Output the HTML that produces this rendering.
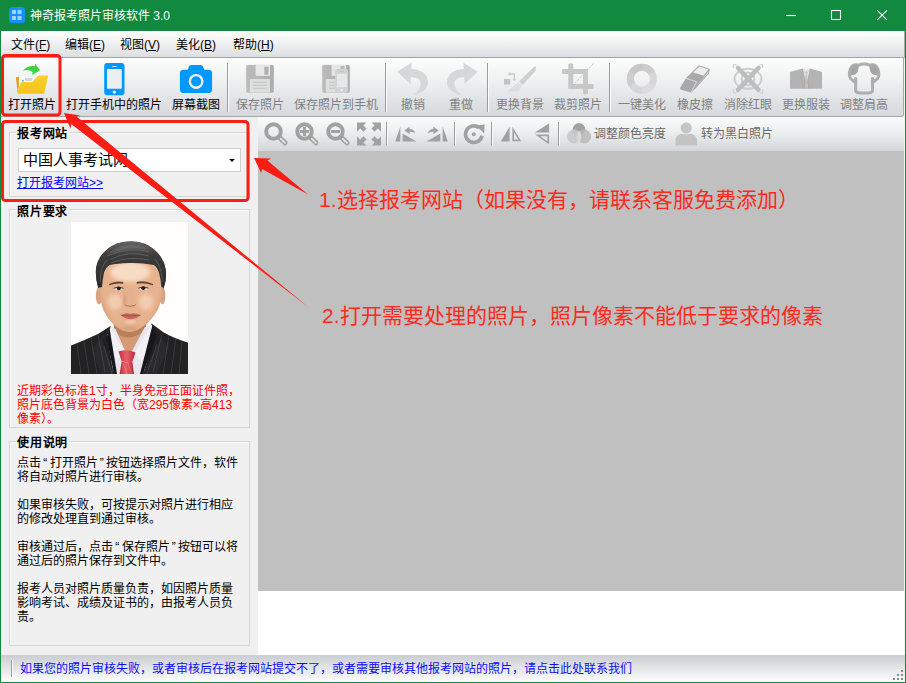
<!DOCTYPE html>
<html lang="zh-CN">
<head>
<meta charset="utf-8">
<title>神奇报考照片审核软件 3.0</title>
<style>
*{box-sizing:border-box;margin:0;padding:0}
html,body{width:906px;height:683px;overflow:hidden;background:#fff}
body{font-family:"Liberation Sans",sans-serif;font-size:12px;color:#000;position:relative}
.abs{position:absolute}
#win{position:absolute;left:0;top:0;width:906px;height:683px;background:#11893e;overflow:hidden}
#title{position:absolute;left:0;top:0;width:906px;height:31px;background:#11893e;color:#fff}
#title .txt{position:absolute;left:30px;top:8px;font-size:12px;line-height:16px;white-space:nowrap;color:#fff}
#appico{position:absolute;left:9px;top:7px;width:16px;height:16px}
#menubar{position:absolute;left:1px;top:31px;width:904px;height:27px;background:linear-gradient(#ffffff 0%,#f3f4f5 35%,#dcdfe2 100%);border-bottom:1px solid #a3a3a3;border-right:1px solid #a8a8a8}
#menubar span{position:absolute;top:6px;line-height:16px;font-size:12px;white-space:nowrap}
#tb1{position:absolute;left:1px;top:58px;width:903px;height:59px;border-right:1px solid #a9a9a9;border-bottom-right-radius:3px;background:linear-gradient(#fdfdfd 0%,#eef0f1 40%,#d5d9dd 100%);border-bottom:1px solid #a6a6a6}
.b{position:absolute;top:0;height:58px}
.b .l{position:absolute;left:-20px;right:-20px;top:39px;text-align:center;line-height:16px;font-size:12px;white-space:nowrap;color:#000}
.b.d .l{color:#7f7f7f}
.b svg{position:absolute;left:50%;top:5px;width:32px;height:32px;margin-left:-16px;overflow:visible}
.sep{position:absolute;width:2px;border-left:1px solid #9c9c9c;border-right:1px solid #fbfbfb}
#left{position:absolute;left:1px;top:117px;width:257px;height:538px;background:#f0f0f0}
.grp{position:absolute;border:1px solid #d5d5d5;box-shadow:inset 1px 1px 0 #fafafa}
.gt{position:absolute;left:15px;font-weight:bold;font-size:12px;line-height:14px;letter-spacing:.8px;margin-top:1px;background:#f0f0f0;padding:0 1px;white-space:nowrap}
#tb2{position:absolute;left:258px;top:117px;width:646px;height:34px;background:linear-gradient(#fbfbfb 0%,#eceeef 45%,#d3d7db 100%)}
#tb2 svg{position:absolute;top:5px;width:24px;height:24px;overflow:visible}
#tb2 .t{position:absolute;top:9px;line-height:16px;font-size:12px;color:#6a6a6a;white-space:nowrap}
#canvas{position:absolute;left:258px;top:151px;width:646px;height:440px;background:#c0c0c0}
#white{position:absolute;left:258px;top:591px;width:646px;height:64px;background:#fff}
#status{position:absolute;left:1px;top:655px;width:904px;height:27px;background:linear-gradient(#cacdd1 0%,#e4e6e8 50%,#fcfcfc 100%)}
#status .txt{position:absolute;left:19px;top:6px;line-height:16px;font-size:12px;color:#0c0cfa;white-space:nowrap}
.q{display:inline-block;width:8.5px;text-align:center;font-style:normal}
.red{font-weight:300;color:#fc2a1c;font-size:21px;line-height:28px;white-space:nowrap;position:absolute}
#ann{position:absolute;left:0;top:0;width:906px;height:683px;pointer-events:none}
</style>
</head>
<body>
<div id="win">
  <div id="title">
    <svg id="appico" viewBox="0 0 16 16"><rect x="0" y="0" width="16" height="16" rx="3.2" fill="#1590ff"/><g fill="#9fd0ff"><rect x="3" y="3" width="4" height="4"/><rect x="8.5" y="3" width="4" height="4"/><rect x="3" y="9" width="4" height="4"/><rect x="8.5" y="9" width="4" height="4"/></g></svg>
    <div class="txt">神奇报考照片审核软件 3.0</div>
    <svg class="abs" style="left:780px;top:5px;width:120px;height:22px" viewBox="0 0 120 22"><g stroke="#fff" stroke-width="1.1" fill="none"><path d="M6 10.5H16"/><rect x="51.5" y="5.5" width="9" height="9"/><path d="M97.3 5.3l9.6 9.6M106.9 5.3l-9.6 9.6"/></g></svg>
  </div>
  <div id="menubar">
    <span style="left:10px">文件(<u>F</u>)</span>
    <span style="left:64px">编辑(<u>E</u>)</span>
    <span style="left:119px">视图(<u>V</u>)</span>
    <span style="left:175px">美化(<u>B</u>)</span>
    <span style="left:232px">帮助(<u>H</u>)</span>
  </div>
  <div class="abs" style="left:900px;top:58px;width:5px;height:597px;background:#f4f4f4"></div>
  <div id="tb1">
<div class="b" style="left:2px;width:58px"><svg viewBox="0 0 32 32"><defs><linearGradient id="fg" x1="0" y1="0" x2="0" y2="1"><stop offset="0" stop-color="#fbd02a"/><stop offset="1" stop-color="#f3c41e"/></linearGradient></defs><path d="M-0.1 14.6Q0 14 .8 13.9L2.9 13.7V24L1.7 30Z" fill="#ee9a1c"/><path d="M3.2 13.4H12L18.5 14.6 16 19 5 19.6 3.2 27Z" fill="#fff"/><path d="M9 14.4l8 .9-1.3 2.6-6.7.2z" fill="#cfd6e2"/><rect x="6.2" y="16.8" width="1.4" height="1.8" fill="#2fa0f0"/><path d="M2.6 30.7Q1.4 30.7 1.7 29.5L4.7 19.8Q5 19 5.9 19H15.6Q16.3 19 16.8 18.4L21.5 13.2Q22 12.6 22.8 12.6H31Q32.3 12.6 32 13.8L28.3 29.8Q28.1 30.7 27.1 30.7Z" fill="url(#fg)"/><path d="M7 7.8Q11.4 2.2 18.8 3.2L19.2.7 24 7.3 16.1 12.1 16.6 8.9Q11.8 5.9 7 7.8Z" fill="#3cd43c"/></svg><div class="l">打开照片</div></div>
<div class="b" style="left:60px;width:106px"><svg viewBox="0 0 32 32"><rect x="6.2" y="0" width="20.3" height="32.2" rx="3" fill="#0099ff"/><rect x="9" y="6.1" width="14.8" height="19.6" rx=".6" fill="#eceeef"/><rect x="14.1" y="2.9" width="4.5" height="1.1" rx=".5" fill="#d8ecfb"/><circle cx="16.3" cy="29.1" r="1.7" fill="#e8f2fa"/></svg><div class="l">打开手机中的照片</div></div>
<div class="b" style="left:166px;width:58px"><svg viewBox="0 0 32 32"><rect x="-.1" y="6.7" width="32.2" height="23.4" rx="3.6" fill="#0099ff"/><path d="M7.4 7.5L8.8 3.7Q9.4 2 11.3 2H20.7Q22.6 2 23.2 3.7L24.6 7.5Z" fill="#0099ff"/><circle cx="16.1" cy="18.4" r="6.3" fill="none" stroke="#f4f1ee" stroke-width="2.4"/></svg><div class="l">屏幕截图</div></div>
<div class="sep" style="left:226px;top:5px;height:49px"></div>
<div class="b d" style="left:230px;width:58px"><svg viewBox="0 0 32 32"><defs><linearGradient id="sg" x1="0" y1="0" x2="1" y2="0"><stop offset="0" stop-color="#bbbbbb"/><stop offset="1" stop-color="#adadad"/></linearGradient></defs><rect x="1.6" y="1.4" width="28.8" height="29" rx="2.4" fill="#e9ebec"/><rect x="2.2" y="2" width="27.6" height="27.8" rx="1.8" fill="url(#sg)"/><rect x="11.6" y="2" width="14.4" height="10.9" fill="#e6e6e6"/><rect x="20.4" y="3.8" width="4.1" height="7.9" rx=".5" fill="#b0b0b0"/><rect x="5.8" y="16" width="20.2" height="13.6" rx=".6" fill="#dddede"/><path d="M9 19.2H22.7M9 22.2H22.7M9 25.3H22.7" stroke="#c2c2c2" stroke-width="1.1"/></svg><div class="l">保存照片</div></div>
<div class="b d" style="left:288px;width:94px"><svg viewBox="0 0 32 32"><rect x="1.6" y="1.4" width="28.8" height="29" rx="2.4" fill="#e9ebec"/><rect x="2.2" y="2" width="27.6" height="27.8" rx="1.8" fill="url(#sg)"/><rect x="11.6" y="2" width="14.4" height="10.9" fill="#e6e6e6"/><rect x="20.4" y="3" width="4.1" height="3" rx=".5" fill="#b8b8b8"/><rect x="5.8" y="16" width="20.2" height="13.6" rx=".6" fill="#dddede"/><path d="M9 19.2H15M9 22.2H15M9 25.3H15" stroke="#c2c2c2" stroke-width="1.1"/><rect x="15.1" y="6.1" width="12.9" height="23.5" rx="2" fill="#d2d2d2"/><rect x="16.9" y="10.8" width="10.1" height="13.4" fill="#e6e7e8"/><rect x="20" y="8.3" width="3.5" height=".8" fill="#bcbcbc"/><rect x="20.6" y="26" width="2.2" height="2" rx=".6" fill="#efefef"/></svg><div class="l">保存照片到手机</div></div>
<div class="sep" style="left:384px;top:5px;height:49px"></div>
<div class="b d" style="left:388px;width:48px"><svg viewBox="0 0 32 32"><path d="M.3 8.8L14.6-.2 14.2 6C22.5 6 31 10.5 31 19.3 31 26 24 31 16.2 32 21 29 24 24.5 23.5 19.8 23 15.6 19 14.2 13.7 14.2L13.5 21Z" fill="#d6d7d8"/></svg><div class="l">撤销</div></div>
<div class="b d" style="left:436px;width:48px"><svg viewBox="0 0 32 32"><path d="M.3 8.8L14.6-.2 14.2 6C22.5 6 31 10.5 31 19.3 31 26 24 31 16.2 32 21 29 24 24.5 23.5 19.8 23 15.6 19 14.2 13.7 14.2L13.5 21Z" fill="#d6d7d8" transform="translate(33 0) scale(-1 1)"/></svg><div class="l">重做</div></div>
<div class="sep" style="left:486px;top:5px;height:49px"></div>
<div class="b d" style="left:490px;width:58px"><svg viewBox="0 0 32 32"><path d="M29.3 4.6L31.8 3.2 31.8 7.6 18.8 21.8 15 18.4Z" fill="#cfcfcf"/><path d="M14.2 19.2L18 22.6 14.8 28.4H3.2Z" fill="#dedede"/><rect x="0" y="16" width="6.2" height="5.6" fill="#c3c3c3"/><path d="M5.6 11H10.4V16.6" fill="none" stroke="#c6c6c6" stroke-width="1.3"/><path d="M3.8 11L6.4 9.2V12.8ZM10.4 18.2L8.6 15.6H12.2Z" fill="#c6c6c6"/></svg><div class="l">更换背景</div></div>
<div class="b d" style="left:548px;width:58px"><svg viewBox="0 0 32 32"><path d="M6.3 2Q6.3.6 7.7.6H9.9Q11.3.6 11.3 2V6.1H26V21H30.3Q31.7 21 31.7 22.4V24.5Q31.7 25.9 30.3 25.9H26V30.1Q26 31.5 24.6 31.5H22.5Q21.1 31.5 21.1 30.1V25.9H6.3V11.1H1.4Q0 11.1 0 9.7V7.5Q0 6.1 1.4 6.1H6.3ZM11.3 11.1V21H21.1V11.1Z" fill="#c7c7c7" fill-rule="evenodd"/><path d="M31.6.4L12.8 20.4" stroke="#cdcdcd" stroke-width="1" stroke-dasharray="3 1.2"/></svg><div class="l">裁剪照片</div></div>
<div class="sep" style="left:608px;top:5px;height:49px"></div>
<div class="b d" style="left:612px;width:58px"><svg viewBox="0 0 32 32"><circle cx="15.9" cy="15.8" r="11.5" fill="none" stroke="#d6d6d6" stroke-width="7"/><g fill="none" stroke-width="7"><path d="M15.9 4.3A11.5 11.5 0 0 1 25.9 10" stroke="#cdcdcd"/><path d="M25.9 21.6A11.5 11.5 0 0 1 15.9 27.3" stroke="#dcdcdc"/><path d="M5.9 21.6A11.5 11.5 0 0 1 5.9 10" stroke="#cecece"/><path d="M5.9 10A11.5 11.5 0 0 1 15.9 4.3" stroke="#c6c6c6"/></g></svg><div class="l">一键美化</div></div>
<div class="b d" style="left:670px;width:48px"><svg viewBox="0 0 32 32"><path d="M.8 25.2L7 15 20 2.2 30.9 6 30 10.4 16.8 25.2 12.2 29.5 1.8 26.8Z" fill="#a9a9a9"/><path d="M14 9.6L20.4 3.4 29.4 6.6 24.6 12.6Z" fill="#eeeeee"/><path d="M25.4 13.4L29.6 8.2 29.2 10 17 23.6Z" fill="#e3e3e3"/><path d="M7 15.2L17.6 18.8 12.4 28.8" fill="none" stroke="#dcdcdc" stroke-width=".9"/></svg><div class="l">橡皮擦</div></div>
<div class="b d" style="left:718px;width:58px"><svg viewBox="0 0 32 32"><ellipse cx="16" cy="15.8" rx="13.4" ry="10" fill="none" stroke="#cdcdcd" stroke-width="2"/><circle cx="16" cy="15.8" r="6.4" fill="none" stroke="#cdcdcd" stroke-width="2"/><path d="M1.4 5V1.8H4.6M27.4 1.8H30.6V5M30.6 26.6V29.8H27.4M4.6 29.8H1.4V26.6" fill="none" stroke="#d0d0d0" stroke-width="1.3"/><path d="M6 5L26.4 26.8M26.4 5L6 26.8" stroke="#bebebe" stroke-width="4.6" stroke-linecap="round"/></svg><div class="l">消除红眼</div></div>
<div class="b d" style="left:776px;width:58px"><svg viewBox="0 0 32 32"><path d="M0 9L12.6 5.6 16.4 8 20.2 5.6 32 9V25.7H0Z" fill="#b3b3b3"/><path d="M12.6 5.4L16.4 7.2 20.2 5.4 17.4 18.4H15.4Z" fill="#e4e4e4"/><path d="M15.2 9L16.4 7.8 17.6 9 17.1 11.2 18.2 23.6 16.4 25.7 14.6 23.6 15.7 11.2Z" fill="#c2c2c2"/><path d="M12.4 6L15 19 13.4 25.7M20.4 6L17.8 19 19.4 25.7" stroke="#a4a4a4" stroke-width=".8" fill="none"/></svg><div class="l">更换服装</div></div>
<div class="b d" style="left:834px;width:58px"><svg viewBox="0 0 32 32"><path d="M10.6 2.2Q16 -.2 21.6 2.2 27.6 .6 30 6.4 31.8 11.6 29.6 15.6L26 18.6 24.4 15.4 24.6 26.6Q24.6 29.9 21.4 29.9H10.8Q7.6 29.9 7.6 26.6L7.8 15.4 6.2 18.6 2.6 15.6Q.4 11.6 2.2 6.4 4.6 .6 10.6 2.2Z" fill="none" stroke="#aeaeae" stroke-width="3" stroke-linejoin="round"/><path d="M10.8 2.2Q4.4 .8 2.6 7 1.8 10.4 3.4 12.6 8.6 12 10 8 10.8 5 10.8 2.2ZM21.4 2.2Q27.8 .8 29.6 7 30.4 10.4 28.8 12.6 23.6 12 22.2 8 21.4 5 21.4 2.2Z" fill="#a6a6a6"/></svg><div class="l">调整肩高</div></div>
</div>
  <div id="left">
<div class="grp" style="left:8px;top:15px;width:241px;height:65px"></div>
<div class="gt" style="top:9px">报考网站</div>
<div class="abs" style="left:17px;top:31px;width:223px;height:24px;background:#fff;border:1px solid #cfcfcf;font-size:15px;line-height:22px;padding-left:4px;white-space:nowrap;overflow:hidden">中国人事考试网</div>
<svg class="abs" style="left:228px;top:41px;width:8px;height:5px" viewBox="0 0 8 5"><path d="M.2.9H5.8L3 4.1Z" fill="#000"/></svg>
<div class="abs" style="left:16px;top:59px;line-height:14px;font-size:12px;color:#0000ff;text-decoration:underline;white-space:nowrap">打开报考网站&gt;&gt;</div>

<div class="grp" style="left:8px;top:92px;width:241px;height:219px"></div>
<div class="gt" style="top:87px">照片要求</div>

<svg class="abs" style="left:70px;top:105px;width:117px;height:152px" viewBox="0 0 117 152">
<defs>
<filter id="bl" x="-5%" y="-5%" width="110%" height="110%"><feGaussianBlur stdDeviation="0.55"/></filter>
<filter id="bl2" x="-20%" y="-20%" width="140%" height="140%"><feGaussianBlur stdDeviation="2.2"/></filter>
<filter id="bl3" x="-20%" y="-20%" width="140%" height="140%"><feGaussianBlur stdDeviation="1.1"/></filter>
<clipPath id="pc"><rect x="0" y="0" width="117" height="152"/></clipPath>
<clipPath id="fc"><path d="M30 52Q30 40 40 36 58 30 78 35 89 40 90 54L91 68Q90.5 80 86.5 88 81 98 72 104.5 65 109.5 58.5 110 52 109.5 45 104.5 37 98 32.5 88 29 80 29 68Z"/></clipPath>
<linearGradient id="hg" x1="0" y1="0" x2="0" y2="1"><stop offset="0" stop-color="#626262"/><stop offset=".3" stop-color="#3c3c3c"/><stop offset="1" stop-color="#2c2c2c"/></linearGradient>
<linearGradient id="tg" x1="0" y1="0" x2="1" y2="0"><stop offset="0" stop-color="#c2303f"/><stop offset=".45" stop-color="#e8606c"/><stop offset="1" stop-color="#b62c3a"/></linearGradient>
</defs>
<rect width="117" height="152" fill="#fffefd"/>
<g clip-path="url(#pc)"><g filter="url(#bl)">
<!-- ears -->
<ellipse cx="28" cy="74" rx="3.2" ry="8.5" fill="#d9a283"/>
<ellipse cx="91.4" cy="74" rx="3" ry="8.5" fill="#d9a283"/>
<!-- neck -->
<path d="M42 92L44 112 36 126 58 150 82 122 74 110 76 92Z" fill="#d39a74"/>
<path d="M42 100Q58 118 76 100L74 108Q58 122 44 110Z" fill="#b27a56" opacity=".8"/>
<!-- suit -->
<path d="M-1 124Q14 118 27 112L39.5 104 50 152H-1Z" fill="#202024"/>
<path d="M118 121Q102 116 92 110L80.5 101.5 64 152H118Z" fill="#202024"/>
<path d="M30 152H88V140H30Z" fill="#202024"/>
<!-- shirt -->
<path d="M39.5 105L44.5 107 55 131 60 131 73.5 105.5 80.5 102.5 84 112 72.5 152H42.5L36 114Z" fill="#e9e5ee"/>
<path d="M39.5 105L53.5 130 46 138 36.5 113Z" fill="#f3f1f6"/>
<path d="M80.5 102.5L63.5 131 70.5 139 84 111Z" fill="#f3f1f6"/>
<!-- lapels -->
<path d="M38.5 106L31 118 43.5 152H30L20 128Z" fill="#29292e"/>
<path d="M81.5 103L90 116 71.5 152H86L98 126Z" fill="#29292e"/>
<path d="M38.5 106L35.5 116 43 152H46Z" fill="#18181b"/>
<path d="M81.5 103L85.5 114 72 152H69Z" fill="#18181b"/>
<!-- pinstripes -->
<g stroke="#6d6d74" stroke-width=".45" opacity=".75" fill="none"><path d="M6 122L10 152M13 119L18 152M20 116L26 152M27 113L34 150M98 113L92 152M105 116L100 152M111 119L108 152M91 112L82 150M33 124L41 152M86 122L76 152"/></g>
<!-- tie -->
<path d="M47.5 129.5Q56 126.5 64.5 130.5L61.5 139.5Q56 141.5 50.5 139Z" fill="url(#tg)"/>
<path d="M50.6 139.2Q56 141.4 61.4 139.6L63 152H48.6Z" fill="url(#tg)"/>
<path d="M52 141L56 152M57 141L60.5 152" stroke="#f0a0a8" stroke-width=".6" opacity=".7"/>
<!-- hair back -->
<path d="M27.5 66Q22.5 50 26.5 40 32 27 46 21.5 60 17 73 21.5 87 27 93 41 97.5 53 92.5 67L89 58 60 34 33 56Z" fill="url(#hg)"/>
<!-- face -->
<path d="M30 52Q30 40 40 36 58 30 78 35 89 40 90 54L91 68Q90.5 80 86.5 88 81 98 72 104.5 65 109.5 58.5 110 52 109.5 45 104.5 37 98 32.5 88 29 80 29 68Z" fill="#e7b28e"/>
<g clip-path="url(#fc)">
 <ellipse cx="59" cy="50" rx="20" ry="10" fill="#f8dcc4" filter="url(#bl2)"/>
 <ellipse cx="44" cy="80" rx="7" ry="8" fill="#f6d4bb" filter="url(#bl2)" opacity=".8"/>
 <ellipse cx="75" cy="80" rx="7" ry="8" fill="#f6d4bb" filter="url(#bl2)" opacity=".8"/>
 <path d="M27 60Q28 90 48 110L26 112Z" fill="#c48c68" filter="url(#bl2)" opacity=".8"/>
 <path d="M93 60Q92 90 70 110L94 112Z" fill="#c48c68" filter="url(#bl2)" opacity=".8"/>
 <ellipse cx="58.5" cy="106.5" rx="9" ry="2.6" fill="#d6a380" filter="url(#bl3)"/><path d="M54 68Q52 78 52.5 83L56 82Z" fill="#c99573" filter="url(#bl3)" opacity=".7"/><ellipse cx="59.5" cy="100" rx="6" ry="2" fill="#f2cdb2" filter="url(#bl3)" opacity=".8"/>
</g>
<!-- hair front -->
<path d="M27 66Q23 50 27 40 32.5 27 46 21.5 60 17.5 73 21.5 87 27 93 41 97 53 92.6 66L90.4 65Q89.5 56 87.9 50.6 86 44.5 82.7 42.9 70 40.4 58 41 46 41.4 38.8 42.9 35 45 33 50.6 31.5 58 31 65Z" fill="url(#hg)"/>
<path d="M36 33Q46 24 60 23 72 23 80 29 68 25 58 26.5 45 28 36 33Z" fill="#767676" opacity=".7" filter="url(#bl3)"/><path d="M78 34Q58 28 40 37M78 30Q60 24 36 34M78 38Q58 33.5 40 41M29.5 60Q28.5 46 36 38M91 60Q91.5 46 84 37" stroke="#747474" stroke-width=".7" fill="none" opacity=".8"/>
<!-- brows -->
<path d="M38 62Q45 58.2 52.4 60L52.2 61.8Q45.5 60.6 38.4 63.2Z" fill="#4a3226" opacity=".85"/>
<path d="M65.6 60Q73 58 82.2 62L81.8 63.2Q73 60.4 65.8 61.8Z" fill="#4a3226" opacity=".85"/>
<!-- eyes -->
<ellipse cx="47.5" cy="66.6" rx="4.6" ry="1.7" fill="#f3e6dc"/><ellipse cx="47.8" cy="66.5" rx="2" ry="1.7" fill="#20140f"/><path d="M42.6 66.3Q47.5 63.6 52.6 66.4" stroke="#2a1a14" stroke-width=".9" fill="none"/>
<ellipse cx="72.4" cy="66.4" rx="4.6" ry="1.7" fill="#f3e6dc"/><ellipse cx="72.2" cy="66.3" rx="2" ry="1.7" fill="#20140f"/><path d="M67.4 66.2Q72.4 63.5 77.4 66.2" stroke="#2a1a14" stroke-width=".9" fill="none"/>
<!-- nose -->
<path d="M57 66Q55.5 76 53.6 81.5 55 84.8 59.3 84.4 63.6 84.8 65 81.5 63 76 62 66" fill="#e2b08e" opacity=".55"/>
<path d="M53.8 82.4Q55.4 84.6 57.4 83.8 59.3 85 61.2 83.8 63.2 84.6 64.8 82.4" stroke="#a06c50" stroke-width=".9" fill="none"/>
<!-- mouth -->
<path d="M49.8 93.2Q55 90.4 59.4 91.8 63.8 90.4 69.6 93.2 64 97.4 59.6 97.2 55 97.4 49.8 93.2Z" fill="#c9665f"/>
<path d="M49.8 93.2Q59.6 94.6 69.6 93.2" stroke="#8e4a44" stroke-width=".7" fill="none"/>
</g></g>
</svg>

<div class="abs" style="left:16px;top:267px;width:232px;line-height:14px;font-size:12px;color:#f00;white-space:nowrap">近期彩色标准1寸，半身免冠正面证件照，<br>照片底色背景为白色（宽295像素×高413<br>像素）。</div>

<div class="grp" style="left:8px;top:324px;width:241px;height:205px"></div>
<div class="gt" style="top:318px">使用说明</div>
<div class="abs" style="left:16px;top:339px;width:232px;line-height:14px;font-size:12px;color:#000;white-space:nowrap">点击<i class="q">“</i>打开照片<i class="q">”</i>按钮选择照片文件，软件<br>将自动对照片进行审核。<br><br>如果审核失败，可按提示对照片进行相应<br>的修改处理直到通过审核。<br><br>审核通过后，点击<i class="q">“</i>保存照片<i class="q">”</i>按钮可以将<br>通过后的照片保存到文件中。<br><br>报考人员对照片质量负责，如因照片质量<br>影响考试、成绩及证书的，由报考人员负<br>责。</div>
</div>
  <div id="tb2">
<svg style="left:6px" viewBox="0 0 24 24"><path d="M15 15L21 20.8" stroke="#a1a1a1" stroke-width="5" stroke-linecap="round"/><path d="M16.6 16.6L21 20.8" stroke="#e6e7e8" stroke-width="1.7" stroke-linecap="round"/><circle cx="9.5" cy="9.5" r="7.3" fill="none" stroke="#a1a1a1" stroke-width="3.9"/></svg>
<svg style="left:37px" viewBox="0 0 24 24"><path d="M15 15L21 20.8" stroke="#a1a1a1" stroke-width="5" stroke-linecap="round"/><path d="M16.6 16.6L21 20.8" stroke="#e6e7e8" stroke-width="1.7" stroke-linecap="round"/><circle cx="9.5" cy="9.5" r="7.3" fill="none" stroke="#a1a1a1" stroke-width="3.9"/><path d="M5 9.5H14M9.5 5V14" stroke="#a1a1a1" stroke-width="3"/></svg>
<svg style="left:68px" viewBox="0 0 24 24"><path d="M15 15L21 20.8" stroke="#a1a1a1" stroke-width="5" stroke-linecap="round"/><path d="M16.6 16.6L21 20.8" stroke="#e6e7e8" stroke-width="1.7" stroke-linecap="round"/><circle cx="9.5" cy="9.5" r="7.3" fill="none" stroke="#a1a1a1" stroke-width="3.9"/><path d="M5 9.5H14" stroke="#a1a1a1" stroke-width="3"/></svg>
<svg style="left:99px" viewBox="0 0 24 24"><g fill="#a1a1a1"><path d="M0 .4H9.4L6.4 3.4 9.6 6.6 6.4 9.8 3.2 6.6 0 9.8Z"/><path d="M24 .4V9.8L20.8 6.6 17.6 9.8 14.4 6.6 17.6 3.4 14.6 .4Z"/><path d="M0 23.6V14.2L3.2 17.4 6.4 14.2 9.6 17.4 6.4 20.6 9.4 23.6Z"/><path d="M24 23.6H14.6L17.6 20.6 14.4 17.4 17.6 14.2 20.8 17.4 24 14.2Z"/></g></svg>
<div class="sep" style="left:128px;top:5px;height:24px"></div>
<svg style="left:136px" viewBox="0 0 24 24"><g fill="#a1a1a1"><path d="M6.4 4.6V19.4H1.2Z"/><path d="M8.6 11.4L22.4 19.4H8.6Z"/><path d="M10.4 8.4L15.6 4.6V6.9Q20.2 6.9 21.2 11.4 19.4 9.6 15.6 9.8V12.2Z"/></g></svg>
<svg style="left:167px" viewBox="0 0 24 24"><g fill="#a1a1a1"><path d="M17.6 4.6V19.4H22.8Z"/><path d="M15.4 11.4L1.6 19.4H15.4Z"/><path d="M13.6 8.4L8.4 4.6V6.9Q3.8 6.9 2.8 11.4 4.6 9.6 8.4 9.8V12.2Z"/></g></svg>
<div class="sep" style="left:196px;top:5px;height:24px"></div>
<svg style="left:204px" viewBox="0 0 24 24"><path d="M17.1 5.8A8.3 8.3 0 1 0 20 13.6" fill="none" stroke="#a1a1a1" stroke-width="3.6"/><path d="M13.8 3.4L22.6 2.4 22.2 11.4Z" fill="#a1a1a1"/><circle cx="11.8" cy="12.2" r="2" fill="#a1a1a1"/></svg>
<div class="sep" style="left:233px;top:5px;height:24px"></div>
<svg style="left:241px" viewBox="0 0 24 24"><path d="M10.6 4.8V19.4H1.8Z" fill="#a1a1a1"/><path d="M14.2 7.6V18.4H20.8Z" fill="none" stroke="#a1a1a1" stroke-width="1.6"/></svg>
<svg style="left:272px" viewBox="0 0 24 24"><path d="M19.2 1.2V10.6H4.8Z" fill="#a1a1a1"/><path d="M18.2 13.4V20.8L7.6 13.4Z" fill="none" stroke="#a1a1a1" stroke-width="1.6"/></svg>
<div class="sep" style="left:300px;top:5px;height:24px"></div>
<svg style="left:309px" viewBox="0 0 24 24"><circle cx="12" cy="7.4" r="6.3" fill="#a2a2a2"/><circle cx="7" cy="14.6" r="7" fill="#c9c9c9" fill-opacity=".92"/><circle cx="17.2" cy="14.6" r="7" fill="#b9b9b9" fill-opacity=".85"/><ellipse cx="12.1" cy="14.6" rx="2" ry="5.4" fill="#d9d9d9"/></svg>
<div class="t" style="left:336px">调整颜色亮度</div>
<svg style="left:416px" viewBox="0 0 24 24"><circle cx="12.2" cy="6" r="5.6" fill="#c6c6c6"/><path d="M1.4 23.4V20Q1.4 12.2 8 11.8 12.2 13.4 16.4 11.8 23 12.2 23 20V23.4Z" fill="#c3c3c3"/></svg>
<div class="t" style="left:443px">转为黑白照片</div>
</div>
  <div id="canvas"></div>
  <div id="white"></div>
  <div id="status">
    <div class="sep" style="left:10px;top:5px;height:17px"></div>
    <div class="txt">如果您的照片审核失败，或者审核后在报考网站提交不了，或者需要审核其他报考网站的照片，请点击此处联系我们</div>
    <svg class="abs" style="left:891px;top:14px;width:12px;height:12px" viewBox="0 0 12 12"><g fill="#8a8a8a"><rect x="9" y="1" width="2" height="2"/><rect x="5" y="5" width="2" height="2"/><rect x="9" y="5" width="2" height="2"/><rect x="1" y="9" width="2" height="2"/><rect x="5" y="9" width="2" height="2"/><rect x="9" y="9" width="2" height="2"/></g></svg>
  </div>
  
<svg id="ann" viewBox="0 0 906 683"><g fill="none" stroke="#fb1c14" stroke-width="3"><rect x="2.5" y="55.5" width="57.5" height="59.5" rx="3"/><rect x="2.5" y="121.5" width="245.5" height="79" rx="3"/></g><g fill="#fb1c14"><path d="M254 158L271.2 158.4 267.4 160.5 308 194.6 262.1 168.9 261.2 173Z"/><path d="M64 113L80.5 115.4 76.5 116.5 310 308.5 71.2 124 70.5 128.8Z"/></g></svg>
<div class="red" style="left:319px;top:186px">1.选择报考网站（如果没有，请联系客服免费添加）</div>
<div class="red" style="left:322px;top:302px">2.打开需要处理的照片，照片像素不能低于要求的像素</div>

</div>
</body>
</html>
